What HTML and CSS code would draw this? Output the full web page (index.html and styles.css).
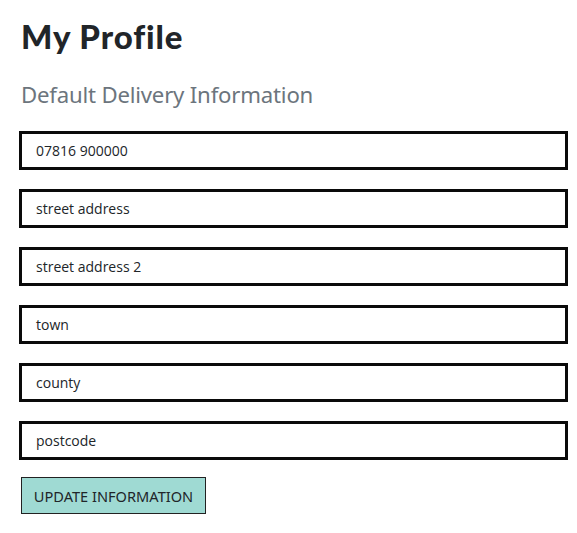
FILE: index.html
```html
<!DOCTYPE html>
<html>
<head>
<meta charset="utf-8">
<link rel="stylesheet" href="styles.css">
</head>
<body>
<main class="page">
  <h1 class="title">My Profile</h1>
  <h2 class="subtitle">Default Delivery Information</h2>
  <form class="form">
    <div class="field">07816 900000</div>
    <div class="field">street address</div>
    <div class="field">street address 2</div>
    <div class="field">town</div>
    <div class="field">county</div>
    <div class="field">postcode</div>
    <div class="actions"><button type="button" class="btn">UPDATE INFORMATION</button></div>
  </form>
</main>
</body>
</html>
```
FILE: styles.css
```css
html, body { margin: 0; padding: 0; background: #fff; }
.page { padding: 16px 10px 0 19px; }
.title {
  margin: 0 0 0 2px;
  font-family: "Lato", "Noto Sans", sans-serif;
  font-weight: 900;
  font-size: 33px;
  line-height: 40px;
  color: #212529;
  letter-spacing: 0.9px;
}
.subtitle {
  margin: 24px 0 0 2px;
  font-family: "Noto Sans", sans-serif;
  font-weight: 400;
  font-size: 22.2px;
  line-height: 30px;
  color: #6c757d;
  letter-spacing: -0.2px;
}
.form { display: flex; flex-direction: column; gap: 19px; margin-top: 21px; }
.field {
  box-sizing: border-box;
  height: 39px;
  border: 3px solid #0a0a0a;
  padding: 0 14px;
  display: flex;
  align-items: center;
  font-family: "Open Sans", sans-serif;
  font-size: 14px;
  color: #212529;
  width: 549px;
}
.actions { margin-top: -2px; }
.btn {
  margin-left: 2px;
  box-sizing: border-box;
  height: 37px;
  width: 185px;
  background: #9fdad3;
  border: 1px solid #222;
  font-family: "Noto Sans", sans-serif;
  font-size: 14.6px;
  color: #212529;
  padding: 0;
  letter-spacing: 0;
}
```
